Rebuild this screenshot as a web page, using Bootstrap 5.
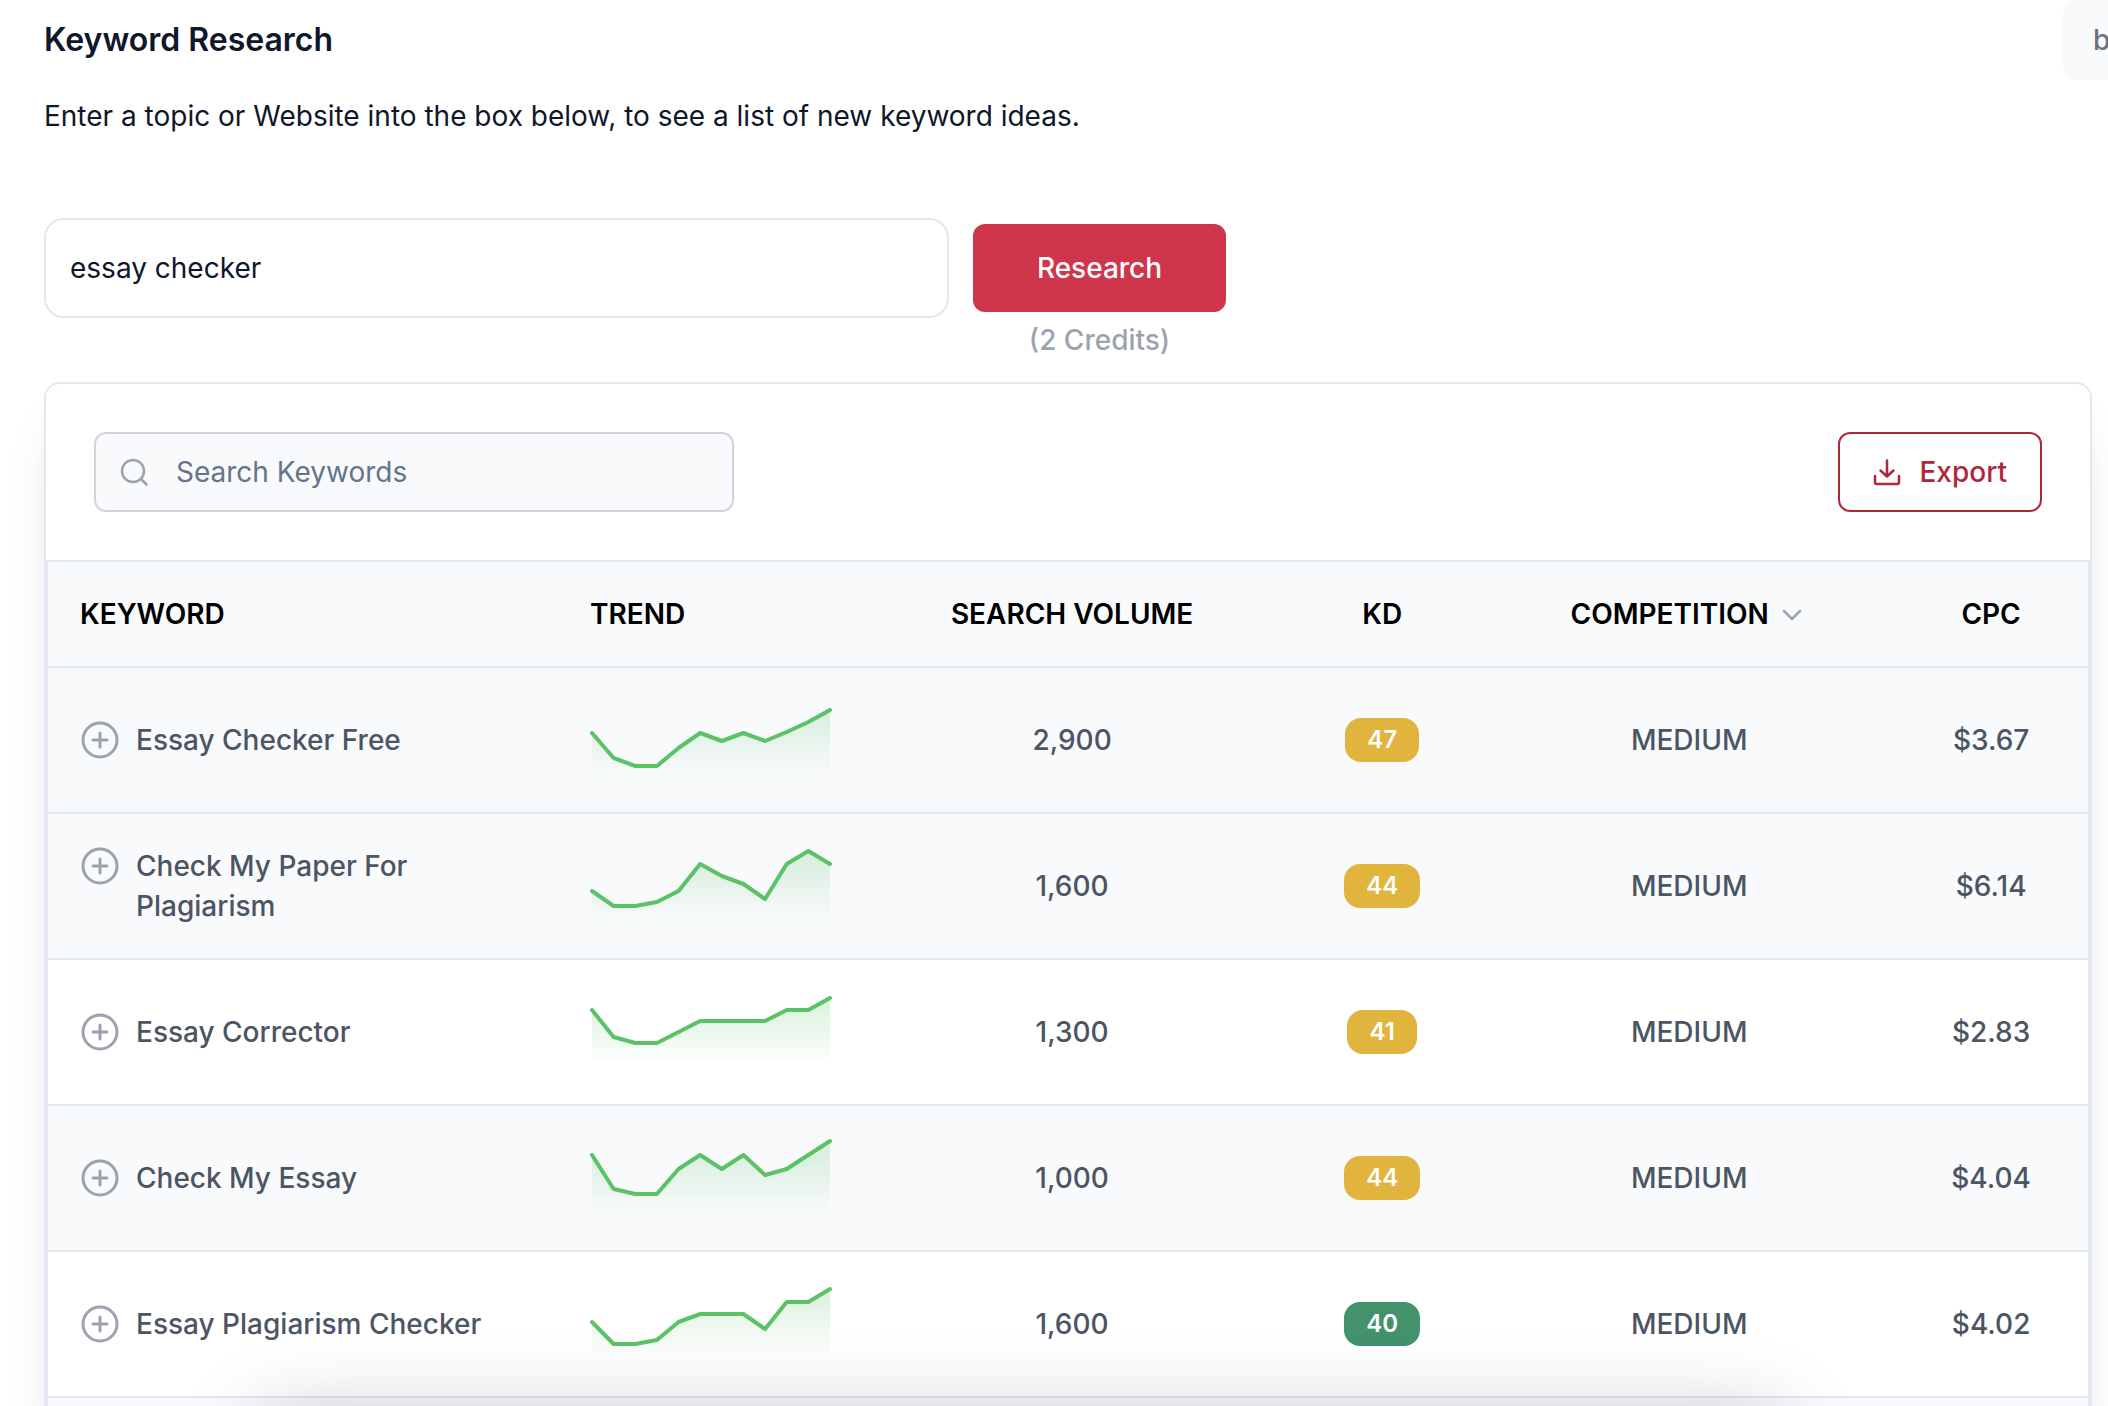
<!DOCTYPE html>
<html lang="en">
<head>
<meta charset="utf-8">
<meta name="viewport" content="width=device-width, initial-scale=1">
<title>Keyword Research</title>
<link href="https://cdn.jsdelivr.net/npm/bootstrap@5.3.0/dist/css/bootstrap.min.css" rel="stylesheet">
<style>
  body { font-family: Inter, "Liberation Sans", sans-serif; font-size: 28px; line-height: 40px; color: #0f172a; background: #fff; }
  .page { padding: 0 16px 0 44px; }
  .topbar { height: 80px; }
  .page-title { font-size: 32px; line-height: 40px; font-weight: 600; }
  .account { flex: none; width: 45px; height: 80px; margin-right: -16px; padding: 20px 0 20px 30px; overflow: hidden; background: #f8fafc; border-radius: 12px 0 0 12px; color: #6b7280; font-weight: 500; text-decoration: none; }
  .intro { margin: 16px 0 82px; }
  .topic-box { flex: 0 1 905px; height: 100px; padding: 0 24px; font-size: 28px; border: 2px solid #e2e8f0; border-radius: 20px; color: #0f172a; }
  .btn-research { width: 253px; height: 88px; font-size: 28px; font-weight: 500; border: 0; border-radius: 12px; color: #fff; background: #cf354b; }
  .action { padding-top: 6px; }
  .credits { color: #9ca3af; font-weight: 500; margin-top: 8px; }
  .form-row { gap: 24px; margin-bottom: 22px; }
  .panel { border: 2px solid #e2e8f0; border-bottom: 0; border-radius: 16px 16px 0 0; min-height: 0; box-shadow: 0 40px 50px -10px rgba(0,0,0,.1), 0 16px 20px -12px rgba(0,0,0,.1); }
  .tools { padding: 48px; }
  .search-wrap { width: 640px; height: 80px; border: 2px solid #d1d5db; border-radius: 12px; background: #f8fafc; padding: 0 24px; gap: 28px; }
  .search-wrap input { font-size: 28px; background: transparent; border: 0; padding: 0; box-shadow: none !important; }
  .search-wrap input::placeholder { color: #64748b; opacity: 1; }
  .btn-export { height: 80px; padding: 0 33px; gap: 18px; font-size: 28px; font-weight: 500; color: #ad273d; border: 2px solid #ad273d; border-radius: 12px; background: #fff; }
  .kw { table-layout: fixed; width: 100%; margin: 0; color: #4b5563; border-collapse: separate; border-spacing: 0; border: solid #e2e8f0; border-width: 2px 2px 0; }
  .kw th, .kw td { padding: 0 32px; vertical-align: middle; }
  .kw th { height: 106px; background: #f8fafc; color: #000; font-weight: 600; white-space: nowrap; border-bottom: 2px solid #e2e8f0; }
  .kw th.mid, .kw td.mid { text-align: center; padding: 0 8px; }
  .kw td { height: 146px; font-weight: 500; border-bottom: 2px solid #e2e8f0; background: #fff; }
  .kw tr.tint td { background: #f8fafc; }
  .kw td.next { height: 8px; border: 0; }
  .kw .cell { gap: 16px; }
  .add { border: 0; background: none; padding: 0; height: 40px; width: 40px; flex: none; color: #9ca3af; }
  .add svg, .spark { display: block; }
  .spark { overflow: visible; }
  .pill { display: inline-block; height: 44px; padding: 0 22px; border-radius: 16px; background: #e1b43e; color: #fff; font-size: 24px; line-height: 44px; font-weight: 600; }
  .pill.easy { background: #43926b; }
  .dock { position: fixed; left: 260px; right: 328px; top: 100%; height: 120px; border-radius: 24px; box-shadow: 0 12px 80px 8px rgba(0,0,0,.18); }
</style>
<script src="https://cdn.jsdelivr.net/npm/bootstrap@5.3.0/dist/js/bootstrap.bundle.min.js"></script>
</head>
<body class="overflow-hidden">
<svg width="0" height="0" class="position-absolute" aria-hidden="true">
  <defs>
    <linearGradient id="fade" gradientUnits="userSpaceOnUse" x1="0" y1="0" x2="0" y2="66">
      <stop offset="0" stop-color="#5bc266" stop-opacity=".22"/><stop offset="1" stop-color="#5bc266" stop-opacity="0"/>
    </linearGradient>
    <symbol id="plus" viewBox="0 0 40 40"><g fill="none" stroke="currentColor" stroke-width="3" stroke-linecap="round"><circle cx="20" cy="20" r="17"/><path d="M20 13v14M13 20h14"/></g></symbol>
  </defs>
</svg>
<main class="page d-flex flex-column vh-100">
  <header class="topbar d-flex flex-shrink-0 justify-content-between align-items-center">
    <h1 class="page-title m-0">Keyword Research</h1>
    <a href="#" class="account">b</a>
  </header>
  <p class="intro">Enter a topic or Website into the box below, to see a list of new keyword ideas.</p>
  <form class="form-row d-flex align-items-start">
    <input class="topic-box form-control" type="text" value="essay checker" aria-label="Topic or website">
    <div class="action d-flex flex-column align-items-center">
      <button type="button" class="btn btn-research">Research</button>
      <div class="credits">(2 Credits)</div>
    </div>
  </form>
  <section class="panel flex-fill">
    <div class="tools d-flex justify-content-between align-items-center">
      <label class="search-wrap d-flex align-items-center">
        <svg width="28" height="28" viewBox="0 0 28 28" fill="none" stroke="#9ca3af" stroke-width="2.5" stroke-linecap="round" class="flex-shrink-0"><circle cx="13" cy="13" r="11"/><path d="M21 21l5.500 5.500"/></svg>
        <input class="form-control" type="search" placeholder="Search Keywords" aria-label="Search Keywords">
      </label>
      <button type="button" class="btn btn-export d-flex align-items-center">
        <svg width="28" height="28" viewBox="0 0 28 28" fill="none" stroke="currentColor" stroke-width="2.5" stroke-linecap="round" stroke-linejoin="round"><path d="M2 18v6a2 2 0 002 2h20a2 2 0 002-2v-6M7.500 12.500l6.500 6 6.500-6M14 18V2.500"/></svg>
        Export
      </button>
    </div>
    <table class="kw">
      <colgroup><col style="width:25%"><col style="width:15%"><col style="width:20.4%"><col style="width:10%"><col style="width:20.1%"><col></colgroup>
      <thead><tr>
        <th scope="col">KEYWORD</th><th scope="col">TREND</th><th scope="col" class="mid">SEARCH VOLUME</th><th scope="col" class="mid">KD</th>
        <th scope="col" class="mid">COMPETITION <svg width="24" height="24" viewBox="0 0 24 24" fill="none" stroke="#9ca3af" stroke-width="2.500" stroke-linecap="round" stroke-linejoin="round" class="ms-1 me-1"><path d="M20 7l-8 8-8-8"/></svg></th>
        <th scope="col" class="mid">CPC</th>
      </tr></thead>
      <tbody id="rows"></tbody>
      <tfoot><tr class="tint"><td class="next" colspan="6"></td></tr></tfoot>
    </table>
  </section>
</main>
<div class="dock"></div>
<script>
  // Trend values are distances from the top of a 64px tall sparkline.
  const rows = [
    ["Essay Checker Free", "2,900", 47, "$3.67", true, [25,50,58,58,40,25,33,25,33,24,14,2]],
    ["Check My Paper For Plagiarism", "1,600", 44, "$6.14", true, [37,52,52,48,37,10,22,30,45,10,-3,10]],
    ["Essay Corrector", "1,300", 41, "$2.83", false, [10,37,43,43,32,21,21,21,21,10,10,-2]],
    ["Check My Essay", "1,000", 44, "$4.04", true, [9,43,48,48,23,9,23,9,29,23,9,-5]],
    ["Essay Plagiarism Checker", "1,600", 40, "$4.02", false, [30,52,52,48,30,22,22,22,37,10,10,-3]]
  ];
  document.getElementById("rows").innerHTML = rows.map(([name, volume, kd, cpc, tint, t]) => {
    const line = t.map((y, i) => `${i * 238 / 11 + 2},${y}`).join(" ");
    return `<tr class="${tint ? "tint" : ""}">
      <td><div class="cell d-flex align-items-start"><button type="button" class="add" aria-label="Add ${name}"><svg width="40" height="40"><use href="#plus"/></svg></button><span>${name}</span></div></td>
      <td><svg class="spark" width="242" height="64"><polygon points="2,66 ${line} 240,66" fill="url(#fade)"/><polyline points="${line}" fill="none" stroke="#5bc266" stroke-width="4" stroke-linecap="round" stroke-linejoin="round"/></svg></td>
      <td class="mid">${volume}</td><td class="mid"><span class="pill ${kd <= 40 ? "easy" : ""}">${kd}</span></td>
      <td class="mid">MEDIUM</td><td class="mid">${cpc}</td></tr>`;
  }).join("");
</script>
</body>
</html>
